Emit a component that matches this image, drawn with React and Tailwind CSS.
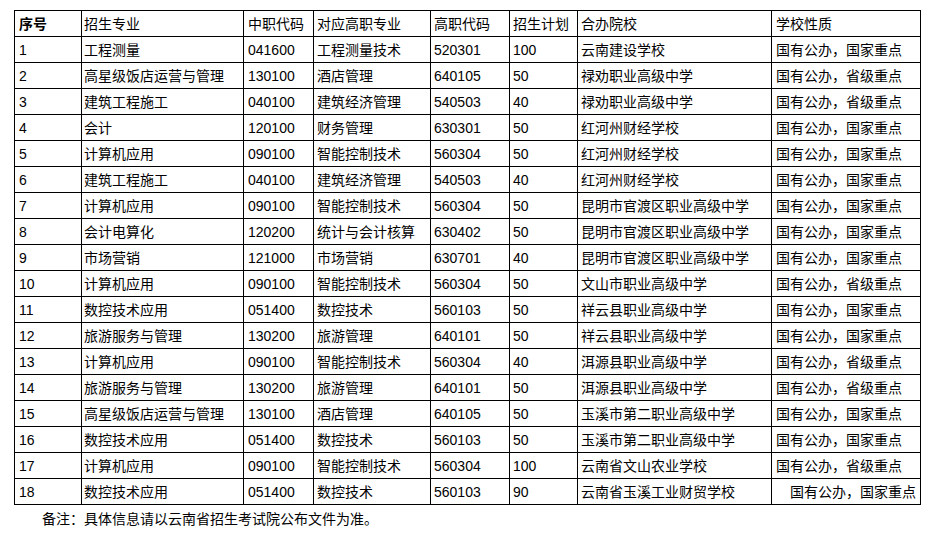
import React from "react";

const rows = [
  ["1", "工程测量", "041600", "工程测量技术", "520301", "100", "云南建设学校", "国有公办，国家重点"],
  ["2", "高星级饭店运营与管理", "130100", "酒店管理", "640105", "50", "禄劝职业高级中学", "国有公办，省级重点"],
  ["3", "建筑工程施工", "040100", "建筑经济管理", "540503", "40", "禄劝职业高级中学", "国有公办，省级重点"],
  ["4", "会计", "120100", "财务管理", "630301", "50", "红河州财经学校", "国有公办，国家重点"],
  ["5", "计算机应用", "090100", "智能控制技术", "560304", "50", "红河州财经学校", "国有公办，国家重点"],
  ["6", "建筑工程施工", "040100", "建筑经济管理", "540503", "40", "红河州财经学校", "国有公办，国家重点"],
  ["7", "计算机应用", "090100", "智能控制技术", "560304", "50", "昆明市官渡区职业高级中学", "国有公办，国家重点"],
  ["8", "会计电算化", "120200", "统计与会计核算", "630402", "50", "昆明市官渡区职业高级中学", "国有公办，国家重点"],
  ["9", "市场营销", "121000", "市场营销", "630701", "40", "昆明市官渡区职业高级中学", "国有公办，国家重点"],
  ["10", "计算机应用", "090100", "智能控制技术", "560304", "50", "文山市职业高级中学", "国有公办，省级重点"],
  ["11", "数控技术应用", "051400", "数控技术", "560103", "50", "祥云县职业高级中学", "国有公办，国家重点"],
  ["12", "旅游服务与管理", "130200", "旅游管理", "640101", "50", "祥云县职业高级中学", "国有公办，国家重点"],
  ["13", "计算机应用", "090100", "智能控制技术", "560304", "40", "洱源县职业高级中学", "国有公办，省级重点"],
  ["14", "旅游服务与管理", "130200", "旅游管理", "640101", "50", "洱源县职业高级中学", "国有公办，省级重点"],
  ["15", "高星级饭店运营与管理", "130100", "酒店管理", "640105", "50", "玉溪市第二职业高级中学", "国有公办，国家重点"],
  ["16", "数控技术应用", "051400", "数控技术", "560103", "50", "玉溪市第二职业高级中学", "国有公办，国家重点"],
  ["17", "计算机应用", "090100", "智能控制技术", "560304", "100", "云南省文山农业学校", "国有公办，省级重点"],
  ["18", "数控技术应用", "051400", "数控技术", "560103", "90", "云南省玉溪工业财贸学校", "国有公办，国家重点"],
];

const headers = ["序号", "招生专业", "中职代码", "对应高职专业", "高职代码", "招生计划", "合办院校", "学校性质"];
const widths = [67, 162, 70, 117, 79, 68, 194, 149];
const pads = ["pl-[4px]", "pl-[2px]", "pl-[4px]", "pl-[3px]", "pl-[3px]", "pl-[3px]", "pl-[3px]", "pl-[4px]"];

export default function App() {
  return (
    <div
      className="w-[939px] h-[536px] bg-white text-black text-[14px] leading-none"
      style={{ fontFamily: '"Liberation Sans", "Noto Sans CJK SC", sans-serif' }}
    >
      <div className="pt-[10px] pl-[14px]">
        <table className="border-collapse table-fixed w-[907px]">
          <colgroup>
            {widths.map((w, i) => (
              <col key={i} style={{ width: w }} />
            ))}
          </colgroup>
          <tbody>
            <tr className="h-[26px]">
              {headers.map((h, i) => (
                <td
                  key={i}
                  className={`border border-black p-0 align-middle whitespace-nowrap ${pads[i]} ${i === 0 ? "font-bold" : ""}`}
                >
                  {h}
                </td>
              ))}
            </tr>
            {rows.map((r, ri) => (
              <tr key={ri} className="h-[26px]">
                {r.map((c, ci) => (
                  <td
                    key={ci}
                    className={`border border-black p-0 align-middle whitespace-nowrap ${pads[ci]} ${
                      ri === 17 && ci === 7 ? "text-right pr-[4px]" : ""
                    }`}
                  >
                    {c}
                  </td>
                ))}
              </tr>
            ))}
          </tbody>
        </table>
        <div className="pl-[28px] pt-[7px]">备注：具体信息请以云南省招生考试院公布文件为准。</div>
      </div>
    </div>
  );
}
